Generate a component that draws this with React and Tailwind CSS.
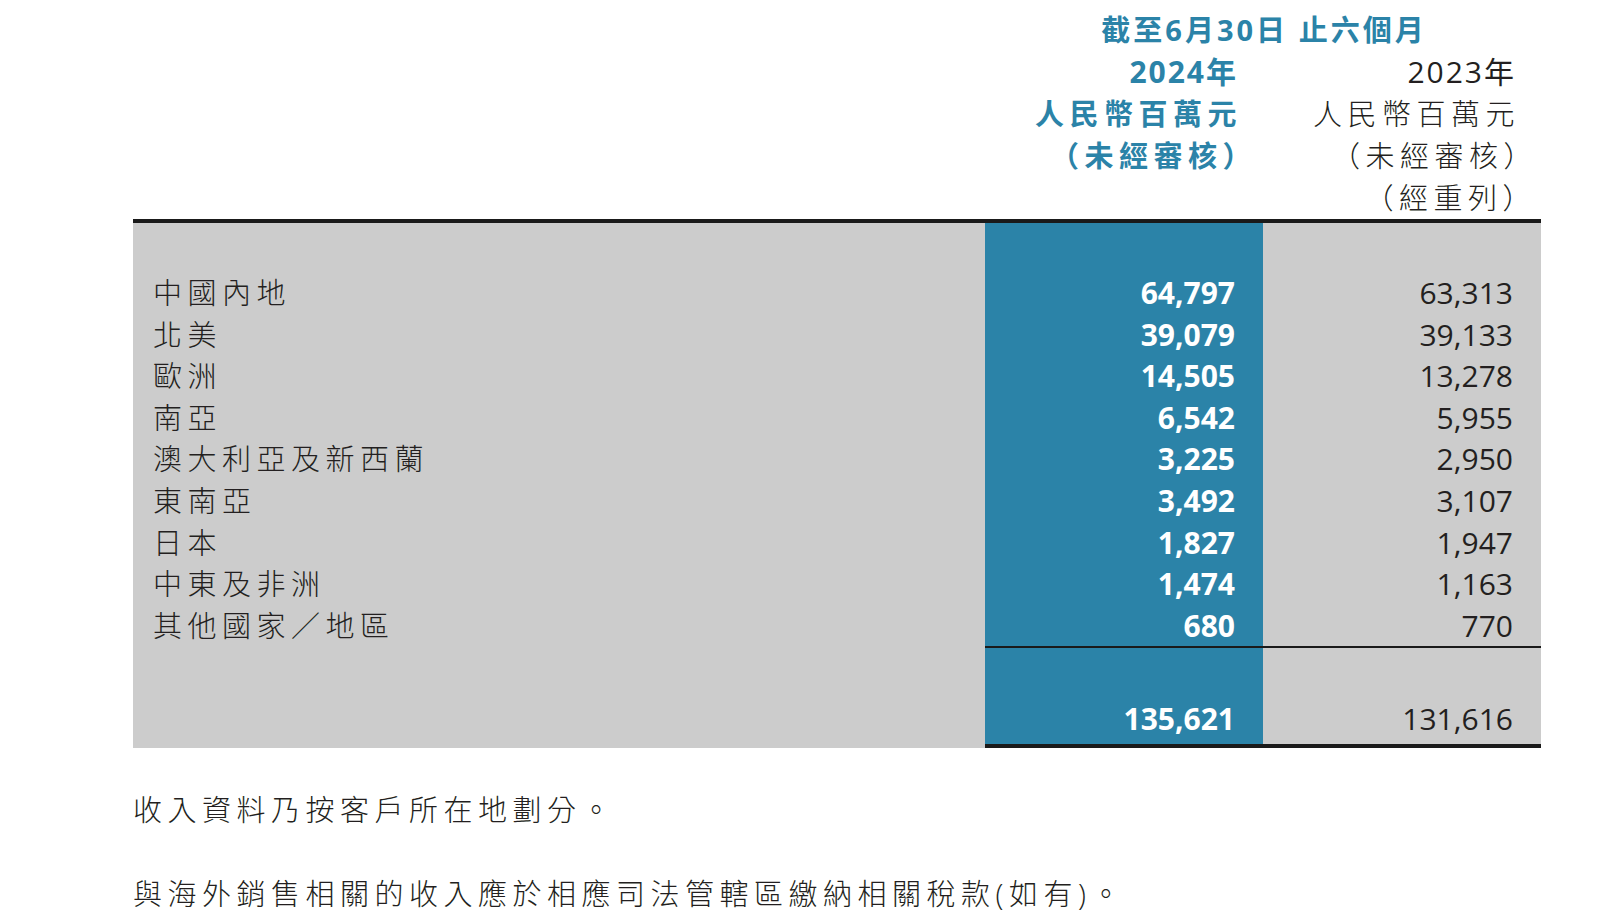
const rows = [
  ['中國內地', '64,797', '63,313'],
  ['北美', '39,079', '39,133'],
  ['歐洲', '14,505', '13,278'],
  ['南亞', '6,542', '5,955'],
  ['澳大利亞及新西蘭', '3,225', '2,950'],
  ['東南亞', '3,492', '3,107'],
  ['日本', '1,827', '1,947'],
  ['中東及非洲', '1,474', '1,163'],
  ['其他國家／地區', '680', '770'],
];

const font = { fontFamily: '"Open Sans", "Noto Sans CJK TC", sans-serif' };

export default function App() {
  return (
    <div className="w-[1600px] h-[924px] bg-white text-[#231f20] pl-[133px] pt-[9px] overflow-hidden" style={font}>
      {/* header */}
      <div className="grid grid-cols-[853px_278px_278px] text-[29px] leading-[42px]">
        <div />
        <div className="col-span-2 text-center font-bold text-[#2b83a8] tracking-[3px]">
          截至6月30日 止六個月
        </div>
        <div className="row-span-4" />
        <div className="text-right pr-[28px] font-bold text-[#2b83a8]">
          <div className="tracking-[2px] mr-[-2px] text-[30px]">2024年</div>
          <div className="tracking-[5.5px] mr-[-6px] font-bold">人民幣百萬元</div>
          <div className="tracking-[5.5px] mr-[-21px]">（未經審核）</div>
        </div>
        <div className="text-right pr-[28px] font-light">
          <div className="tracking-[2px] mr-[-2px] text-[30px] font-normal">2023年</div>
          <div className="tracking-[5.5px] mr-[-6px]">人民幣百萬元</div>
          <div className="tracking-[5.5px] mr-[-24px]">（未經審核）</div>
          <div className="tracking-[5.5px] mr-[-23px]">（經重列）</div>
        </div>
      </div>

      {/* table body */}
      <div className="flex w-[1408px] border-t-4 border-[#1a1a1a] text-[30px] leading-[41.6px]">
        <div className="w-[852px] bg-[#cccccc] pt-[49px] pl-[20px] tracking-[5.5px] text-[29px] font-light">
          {rows.map((r) => (
            <div key={r[0]} className="h-[41.6px]">{r[0]}</div>
          ))}
        </div>
        <div className="w-[278px] bg-[#2b83a8] text-white font-bold text-right pr-[28px] flex flex-col border-b-4 border-[#1a1a1a]">
          <div className="pt-[49px] border-b-2 border-[#1a1a1a] mr-[-28px] pr-[28px]">
            {rows.map((r) => (
              <div key={r[0]} className="h-[41.6px]">{r[1]}</div>
            ))}
          </div>
          <div className="pt-[50px] pb-[4px] h-[41.6px] box-content">135,621</div>
        </div>
        <div className="w-[278px] bg-[#cccccc] text-right pr-[28px] flex flex-col border-b-4 border-[#1a1a1a]">
          <div className="pt-[49px] border-b-2 border-[#1a1a1a] mr-[-28px] pr-[28px]">
            {rows.map((r) => (
              <div key={r[0]} className="h-[41.6px]">{r[2]}</div>
            ))}
          </div>
          <div className="pt-[50px] pb-[4px] h-[41.6px] box-content">131,616</div>
        </div>
      </div>

      {/* notes */}
      <div className="text-[29px] leading-[42px] tracking-[5.5px] font-light">
        <p className="mt-[41px]">收入資料乃按客戶所在地劃分。</p>
        <p className="mt-[42px]">與海外銷售相關的收入應於相應司法管轄區繳納相關稅款(如有)。</p>
      </div>
    </div>
  );
}
